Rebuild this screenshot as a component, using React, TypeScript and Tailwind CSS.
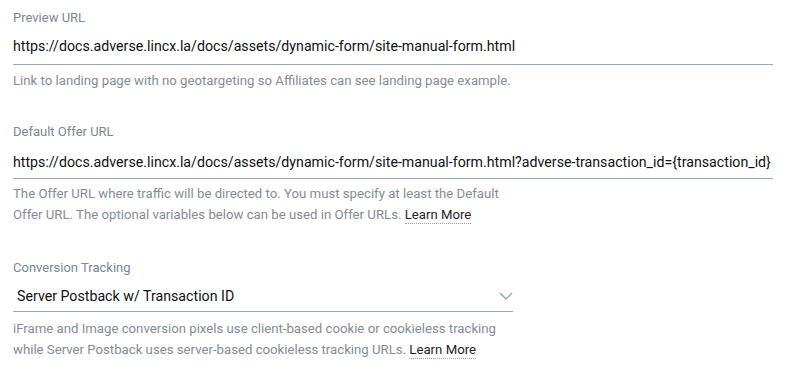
import React from "react";

function LearnMore() {
  return (
    <a className="text-[#1f2329] border-b border-dotted border-[#9aa3ad] pb-[1px]">Learn More</a>
  );
}

const help = "text-[13.2px] leading-[21px] text-[#858c96] whitespace-nowrap";
const label = "text-[13px] leading-[20px] text-[#7d8794]";
const value = "text-[14.2px] leading-[18px] text-[#111] whitespace-nowrap";

export default function App() {
  return (
    <div className="w-[793px] h-[371px] overflow-hidden bg-white px-[13px] pt-[8px]" style={{ fontFamily: "Roboto, 'Liberation Sans', sans-serif" }}>
      <div className="w-[760px]">
        <div className={label}>Preview URL</div>
        <div className={`mt-[9px] ${value}`}>https://docs.adverse.lincx.la/docs/assets/dynamic-form/site-manual-form.html</div>
        <div className="mt-[9px] h-px bg-[#9ba7b3]" />
        <p className={`mt-[5px] ${help}`}>Link to landing page with no geotargeting so Affiliates can see landing page example.</p>
      </div>
      <div className="w-[760px] mt-[31px]">
        <div className={label}>Default Offer URL</div>
        <div className={`mt-[11px] ${value}`}>https://docs.adverse.lincx.la/docs/assets/dynamic-form/site-manual-form.html?adverse-transaction_id={"{transaction_id}"}</div>
        <div className="mt-[7px] h-px bg-[#9ba7b3]" />
        <p className={`mt-[4px] ${help}`}>
          The Offer URL where traffic will be directed to. You must specify at least the Default<br />
          Offer URL. The optional variables below can be used in Offer URLs. <LearnMore />
        </p>
      </div>
      <div className="w-[500px] mt-[33px]">
        <div className={label}>Conversion Tracking</div>
        <div className="mt-[9px] flex items-center justify-between pl-[4px]">
          <span className={value}>Server Postback w/ Transaction ID</span>
          <svg width="14" height="8" viewBox="0 0 14 8">
            <path d="M1 1 L7 7 L13 1" fill="none" stroke="#8c98a6" strokeWidth="1.2" />
          </svg>
        </div>
        <div className="mt-[6px] h-px bg-[#9ba7b3]" />
        <p className={`mt-[6px] ${help}`}>
          iFrame and Image conversion pixels use client-based cookie or cookieless tracking<br />
          while Server Postback uses server-based cookieless tracking URLs. <LearnMore />
        </p>
      </div>
    </div>
  );
}
